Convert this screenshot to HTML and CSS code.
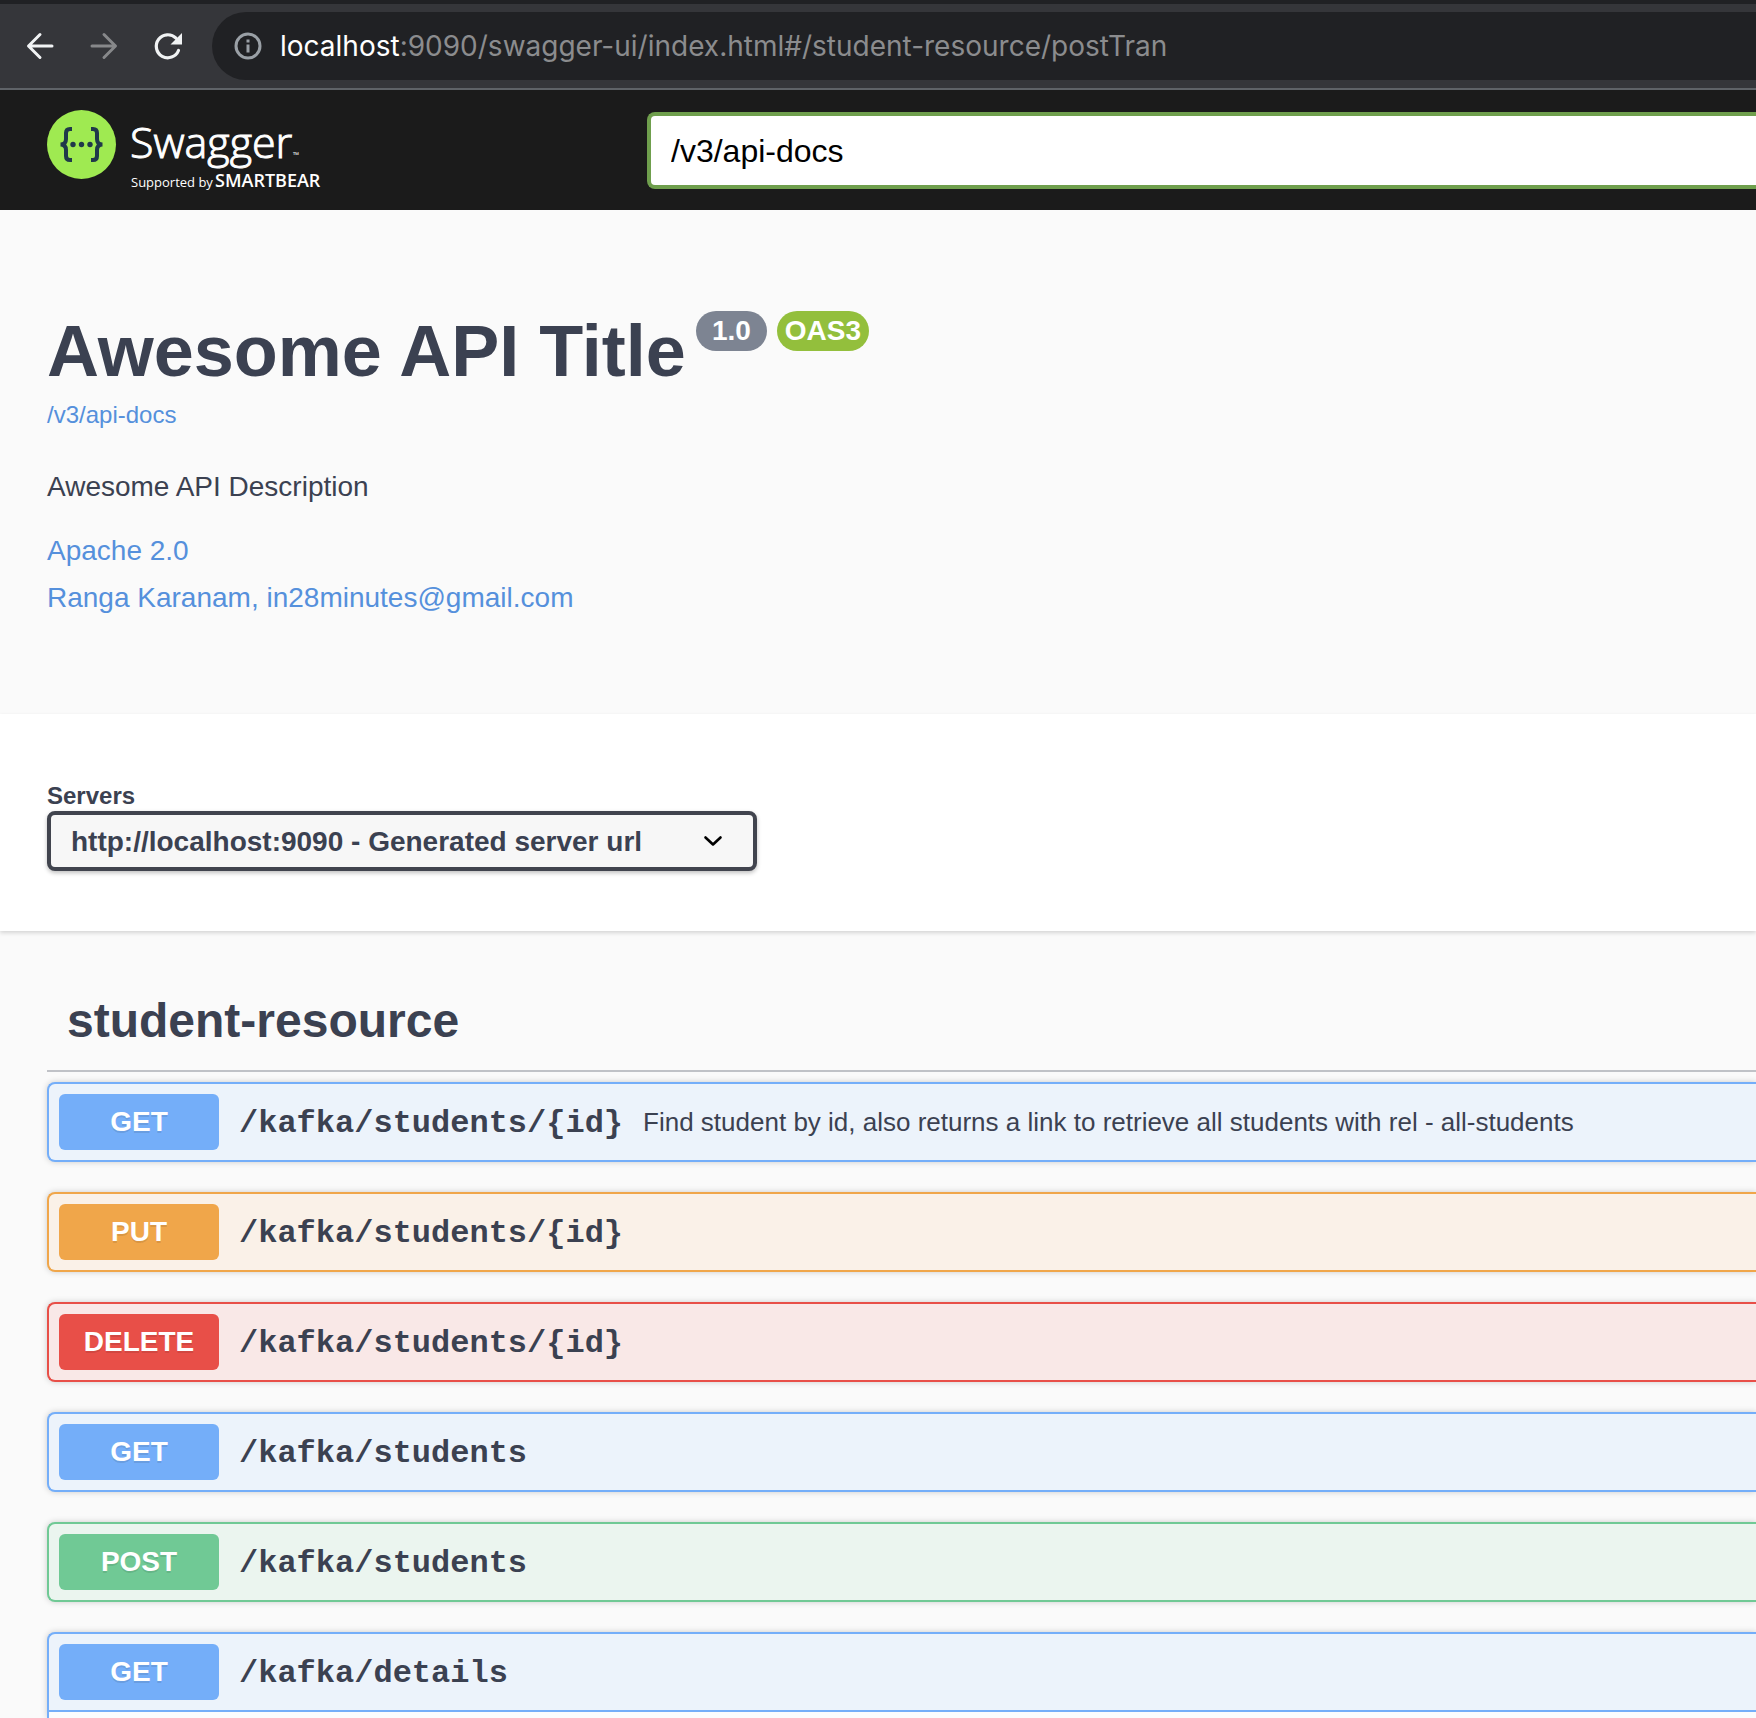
FILE: index.html
```html
<!DOCTYPE html>
<html lang="en">
<head>
<meta charset="utf-8">
<meta name="viewport" content="width=device-width, initial-scale=1">
<title>Swagger UI</title>
<link rel="stylesheet" href="styles.css">
</head>
<body>
<div class="browser-bar">
  <button class="nav-button" type="button" aria-label="Back">
    <svg width="32" height="32" viewBox="0 0 32 32" fill="none" stroke="#f1f3f4" stroke-width="3" stroke-linecap="round" stroke-linejoin="round"><path d="M28 16H5M16 4.500L4.500 16L16 27.500"/></svg>
  </button>
  <button class="nav-button" type="button" aria-label="Forward">
    <svg width="32" height="32" viewBox="0 0 32 32" fill="none" stroke="#87888a" stroke-width="3" stroke-linecap="round" stroke-linejoin="round"><path d="M4 16H27M16 4.500L27.500 16L16 27.500"/></svg>
  </button>
  <button class="nav-button" type="button" aria-label="Reload">
    <svg width="32" height="32" viewBox="0 0 32 32"><path d="M26.500 20.500A11.500 11.500 0 1 1 24 8.200" fill="none" stroke="#f1f3f4" stroke-width="3.200" stroke-linecap="round"/><path d="M30 3V14.500H18.500Z" fill="#f1f3f4"/></svg>
  </button>
  <div class="address">
    <svg width="28" height="28" viewBox="0 0 28 28"><circle cx="14" cy="14" r="12" fill="none" stroke="#9aa0a6" stroke-width="3"/><path d="M12.500 12.500h3v8h-3zM12.500 7.500h3v3h-3z" fill="#9aa0a6"/></svg>
    <span class="address-text"><span class="address-host">localhost</span>:9090/swagger-ui/index.html#/student-resource/postTran</span>
  </div>
</div>

<header class="topbar">
  <a class="logo" href="#" aria-label="Swagger, supported by SmartBear">
    <svg width="284" height="84" viewBox="0 0 284 84">
      <circle cx="34.500" cy="36.500" r="34.500" fill="#9fea51"/>
      <g fill="none" stroke="#20394a" stroke-width="4">
        <path d="M25 21h-2q-4 0-4 4v6q0 5.500-5.500 5.500q5.500 0 5.500 5.500v6q0 4 4 4h2"/>
        <path d="M44 21h2q4 0 4 4v6q0 5.500 5.500 5.500q-5.500 0-5.500 5.500v6q0 4-4 4h-2"/>
      </g>
      <g fill="#20394a"><circle cx="26" cy="36.500" r="2.700"/><circle cx="34.500" cy="36.500" r="2.700"/><circle cx="43" cy="36.500" r="2.700"/></g>
      <text class="logo-name" x="83" y="50">Swagger</text>
      <text class="logo-mark" x="246" y="50">™</text>
      <text class="logo-support" x="84" y="79">Supported by</text>
      <text class="logo-company" x="168" y="79">SMARTBEAR</text>
    </svg>
  </a>
  <input class="spec-input" type="text" value="/v3/api-docs" aria-label="Specification URL">
</header>

<main>
  <section class="info">
    <div class="title-row">
      <h1 class="title">Awesome API Title</h1>
      <span class="badge badge-version">1.0</span>
      <span class="badge badge-oas">OAS3</span>
    </div>
    <a class="spec-link" href="#">/v3/api-docs</a>
    <p class="description">Awesome API Description</p>
    <a class="info-link license" href="#">Apache 2.0</a>
    <a class="info-link" href="mailto:in28minutes@gmail.com">Ranga Karanam, in28minutes@gmail.com</a>
  </section>

  <section class="servers">
    <label class="servers-label" for="server">Servers</label>
    <div class="select-box">
      <select class="server-select" id="server"><option>http://localhost:9090 - Generated server url</option></select>
      <svg class="select-arrow" width="24" height="24" viewBox="0 0 24 24" fill="none" stroke="#000" stroke-width="2.600" stroke-linecap="round" stroke-linejoin="round"><path d="M4.500 8.500l7.500 7l7.500-7"/></svg>
    </div>
  </section>

  <section class="resource">
    <h2 class="tag">student-resource</h2>
    <div class="operations">
      <div class="op op-get"><div class="op-summary"><button class="method" type="button">GET</button><a class="path" href="#">/kafka/students/{id}</a><span class="op-text">Find student by id, also returns a link to retrieve all students with rel - all-students</span></div></div>
      <div class="op op-put"><div class="op-summary"><button class="method" type="button">PUT</button><a class="path" href="#">/kafka/students/{id}</a></div></div>
      <div class="op op-delete"><div class="op-summary"><button class="method" type="button">DELETE</button><a class="path" href="#">/kafka/students/{id}</a></div></div>
      <div class="op op-get"><div class="op-summary"><button class="method" type="button">GET</button><a class="path" href="#">/kafka/students</a></div></div>
      <div class="op op-post"><div class="op-summary"><button class="method" type="button">POST</button><a class="path" href="#">/kafka/students</a></div></div>
      <div class="op op-get op-open"><div class="op-summary"><button class="method" type="button">GET</button><a class="path" href="#">/kafka/details</a></div><div class="op-body"></div></div>
    </div>
  </section>
</main>
</body>
</html>
```

FILE: styles.css
```css
* { box-sizing: border-box; }

body {
  margin: 0;
  background: #fafafa;
  color: #3b4151;
  font-family: "Liberation Sans", Arial, sans-serif;
  overflow-x: hidden;
}

h1, h2, p { margin: 0; }
a { text-decoration: none; }
button { border: 0; font-family: inherit; }
svg { display: block; }

/* Browser toolbar */
.browser-bar {
  display: flex;
  align-items: center;
  gap: 32px;
  height: 90px;
  padding: 4px 0 4px 24px;
  background: #35363a;
  border-top: 4px solid #202124;
  border-bottom: 2px solid #5f6368;
}

.nav-button { padding: 0; background: none; }

.address {
  display: flex;
  flex: 1;
  align-items: center;
  gap: 18px;
  height: 68px;
  margin-left: -4px;
  padding-left: 22px;
  background: #202124;
  border-radius: 34px 0 0 34px;
}

.address-text {
  color: #8b8c8e;
  font-family: Inter, sans-serif;
  font-size: 28px;
  line-height: 36px;
  white-space: nowrap;
}

.address-host { color: #fff; }

/* Swagger header */
.topbar {
  display: flex;
  align-items: center;
  height: 120px;
  padding-left: 47px;
  background: #1b1b1b;
}

.logo { flex: 0 0 600px; }
.logo text { fill: #fff; font-family: "Open Sans", sans-serif; }
.logo .logo-name { font-size: 43px; font-weight: 300; stroke: #fff; stroke-width: 1px; }
.logo .logo-mark { font-size: 8px; }
.logo .logo-support { font-size: 13px; }
.logo .logo-company { font-size: 18px; font-weight: 600; }

.spec-input {
  flex: 1;
  min-width: 0;
  height: 77px;
  padding: 2px 20px 0;
  border: 4px solid #6f9f4d;
  border-right: 0;
  border-radius: 8px 0 0 8px;
  background: #fff;
  color: #000;
  font-family: inherit;
  font-size: 32px;
}

/* API information */
.info {
  display: flex;
  flex-direction: column;
  align-items: flex-start;
  padding: 101px 47px 100px;
}

.title-row { display: flex; align-items: flex-start; gap: 10px; }
.title { font-size: 72px; line-height: 80px; }

.badge {
  border-radius: 20px;
  color: #fff;
  font-size: 28px;
  font-weight: 700;
  line-height: 40px;
}

.badge-version { padding: 0 16px; background: #7d8492; }
.badge-oas { padding: 0 8px; background: #93bf3c; }

.spec-link { margin-top: 8px; color: #5590dc; font-size: 24px; line-height: 32px; }
.description { margin-top: 40px; font-size: 28px; line-height: 32px; }
.info-link { margin-top: 15px; color: #5590dc; font-size: 28px; line-height: 32px; }
.license { margin-top: 32px; }

/* Server picker */
.servers {
  position: relative;
  padding: 68px 47px 60px;
  background: #fff;
  box-shadow: 0 2px 4px 0 rgba(0, 0, 0, .15);
}

.servers-label { display: block; padding-bottom: 1px; font-size: 24px; font-weight: 700; line-height: 28px; }
.select-box { position: relative; width: 710px; max-width: 100%; }

.server-select {
  display: block;
  width: 100%;
  height: 60px;
  padding: 0 80px 0 20px;
  appearance: none;
  border: 4px solid #41444e;
  border-radius: 8px;
  background: #f7f7f7;
  box-shadow: 0 2px 4px rgba(0, 0, 0, .25);
  color: #3b4151;
  font-family: inherit;
  font-size: 28px;
  font-weight: 700;
}

.select-arrow { position: absolute; top: 18px; right: 32px; pointer-events: none; }

/* Operations */
.resource { padding: 62px 0 0 47px; }

.tag {
  padding: 0 20px 21px;
  border-bottom: 2px solid #c0c2c7;
  font-size: 48px;
  line-height: 56px;
}

.operations { display: grid; gap: 30px; padding-top: 10px; }

.op {
  border: 2px solid;
  border-right: 0;
  border-radius: 8px 0 0 8px;
  box-shadow: 0 0 6px rgba(0, 0, 0, .19);
}

.op-summary { display: flex; align-items: center; gap: 20px; padding: 10px; }

.method {
  flex: 0 0 160px;
  height: 56px;
  padding: 0;
  border-radius: 6px;
  color: #fff;
  font-size: 28px;
  font-weight: 700;
  text-shadow: 0 2px 0 rgba(0, 0, 0, .1);
}

.path {
  padding-top: 4px;
  color: #3b4151;
  font-family: "Liberation Mono", monospace;
  font-size: 32px;
  font-weight: 700;
  line-height: 36px;
  white-space: nowrap;
}

.op-text { font-size: 26px; line-height: 32px; }

.op-get { border-color: #74aef9; background: #ecf3fb; }
.op-get .method { background: #74aef9; }
.op-put { border-color: #f0a64a; background: #faf1e8; }
.op-put .method { background: #f0a64a; }
.op-delete { border-color: #e84f48; background: #f9e8e7; }
.op-delete .method { background: #e84f48; }
.op-post { border-color: #70c995; background: #ebf5ef; }
.op-post .method { background: #70c995; }

.op-open { border-bottom: 0; border-bottom-left-radius: 0; }
.op-open .op-summary { border-bottom: 2px solid #74aef9; }
.op-body { min-height: 6px; background: #fbfcfe; }
```
